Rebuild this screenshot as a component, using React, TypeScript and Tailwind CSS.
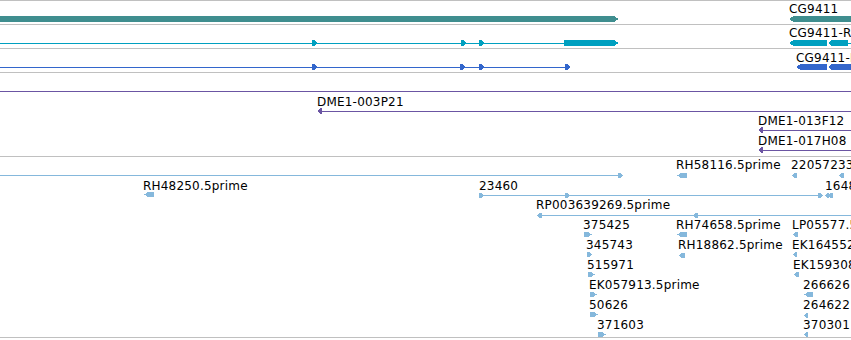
import React from 'react'

type Dir = 'r' | 'l' | 'n'

interface Shape {
  x: number
  y: number
  w: number
  h: number
  dir: Dir
  head?: number
  color: string
}

interface Line {
  x: number
  y: number
  w: number
  color: string
}

interface Text {
  x: number
  y: number
  text: string
}

interface Track {
  height: number
  lines: Line[]
  shapes: Shape[]
  labels: Text[]
}

const TEAL = '#3f8e8f'
const CYAN = '#00a0c0'
const BLUE = '#3366cc'
const PURPLE = '#6b55a3'
const EST = '#85b8dc'

function points(w: number, h: number, dir: Dir, head: number) {
  if (dir === 'r') return `0,0 ${w - head},0 ${w},${h / 2} ${w - head},${h} 0,${h}`
  if (dir === 'l') return `${head},0 ${w},0 ${w},${h} ${head},${h} 0,${h / 2}`
  return `0,0 ${w},0 ${w},${h} 0,${h}`
}

function Glyph({ s }: { s: Shape }) {
  return (
    <svg
      className="absolute"
      style={{ left: s.x, top: s.y }}
      width={s.w}
      height={s.h}
      viewBox={`0 0 ${s.w} ${s.h}`}
    >
      <polygon points={points(s.w, s.h, s.dir, s.head ?? 3)} fill={s.color} shapeRendering="crispEdges" />
    </svg>
  )
}

// small flag marker drawn on an intron line
const mark = (x: number, y: number, color: string, dir: Dir = 'r'): Shape => ({ x, y, w: 5, h: 6, dir, head: 3, color })
const est = (x: number, y: number, w: number, dir: Dir): Shape => ({ x, y, w, h: 5, dir, head: w > 6 ? 4 : 3, color: EST })

const tracks: Track[] = [
  {
    height: 23,
    lines: [],
    shapes: [
      { x: 0, y: 15, w: 619, h: 6, dir: 'r', head: 5, color: TEAL },
      { x: 789, y: 15, w: 70, h: 6, dir: 'l', head: 5, color: TEAL },
    ],
    labels: [{ x: 789, y: 1, text: 'CG9411' }],
  },
  {
    height: 23,
    lines: [
      { x: 0, y: 18, w: 564, color: CYAN },
      { x: 846, y: 18, w: 6, color: CYAN },
    ],
    shapes: [
      mark(312, 15, CYAN),
      mark(461, 15, CYAN),
      mark(479, 15, CYAN),
      { x: 564, y: 15, w: 55, h: 6, dir: 'r', head: 5, color: CYAN },
      { x: 789, y: 15, w: 38, h: 6, dir: 'l', head: 5, color: CYAN },
      { x: 828, y: 15, w: 20, h: 6, dir: 'l', head: 4, color: CYAN },
    ],
    labels: [{ x: 789, y: 1, text: 'CG9411-RA' }],
  },
  {
    height: 23,
    lines: [{ x: 0, y: 18, w: 566, color: BLUE }],
    shapes: [
      mark(312, 15, BLUE),
      mark(460, 15, BLUE),
      mark(479, 15, BLUE),
      mark(565, 15, BLUE),
      { x: 796, y: 15, w: 31, h: 6, dir: 'l', head: 5, color: BLUE },
      { x: 828, y: 15, w: 30, h: 6, dir: 'l', head: 4, color: BLUE },
    ],
    labels: [{ x: 796, y: 2, text: 'CG9411-RB' }],
  },
  {
    height: 83,
    lines: [
      { x: 0, y: 18, w: 851, color: PURPLE },
      { x: 318, y: 38, w: 533, color: PURPLE },
      { x: 759, y: 57, w: 92, color: PURPLE },
      { x: 759, y: 77, w: 92, color: PURPLE },
    ],
    shapes: [mark(317, 35, PURPLE, 'l'), mark(758, 54, PURPLE, 'l'), mark(758, 74, PURPLE, 'l')],
    labels: [
      { x: 317, y: 22, text: 'DME1-003P21' },
      { x: 758, y: 41, text: 'DME1-013F12' },
      { x: 758, y: 61, text: 'DME1-017H08' },
    ],
  },
  {
    height: 180,
    lines: [
      { x: 0, y: 18, w: 620, color: EST },
      { x: 480, y: 38, w: 342, color: EST },
      { x: 537, y: 58, w: 314, color: EST },
    ],
    shapes: [
      est(618, 16, 5, 'r'),
      est(677, 16, 10, 'l'),
      est(792, 16, 5, 'l'),
      est(839, 16, 5, 'l'),
      est(144, 35, 10, 'l'),
      est(479, 36, 5, 'r'),
      est(565, 36, 5, 'r'),
      est(818, 36, 5, 'r'),
      est(825, 36, 4, 'l'),
      est(828, 36, 5, 'l'),
      est(537, 56, 5, 'l'),
      est(693, 56, 5, 'l'),
      est(584, 75, 8, 'r'),
      est(587, 95, 5, 'r'),
      est(588, 115, 7, 'r'),
      est(590, 135, 7, 'r'),
      est(590, 155, 8, 'r'),
      est(598, 175, 8, 'r'),
      est(677, 75, 10, 'l'),
      est(679, 96, 6, 'l'),
      est(793, 75, 5, 'l'),
      est(793, 95, 4, 'l'),
      est(794, 115, 5, 'l'),
      est(804, 135, 9, 'l'),
      est(804, 156, 4, 'l'),
      est(804, 175, 4, 'l'),
    ],
    labels: [
      { x: 676, y: 1, text: 'RH58116.5prime' },
      { x: 791, y: 1, text: '22057233' },
      { x: 143, y: 22, text: 'RH48250.5prime' },
      { x: 479, y: 22, text: '23460' },
      { x: 825, y: 22, text: '164827' },
      { x: 536, y: 41, text: 'RP003639269.5prime' },
      { x: 583, y: 61, text: '375425' },
      { x: 586, y: 81, text: '345743' },
      { x: 587, y: 101, text: '515971' },
      { x: 589, y: 121, text: 'EK057913.5prime' },
      { x: 589, y: 141, text: '50626' },
      { x: 597, y: 161, text: '371603' },
      { x: 676, y: 61, text: 'RH74658.5prime' },
      { x: 678, y: 81, text: 'RH18862.5prime' },
      { x: 792, y: 61, text: 'LP05577.5prime' },
      { x: 792, y: 81, text: 'EK164552.5prime' },
      { x: 793, y: 101, text: 'EK159308.5prime' },
      { x: 803, y: 121, text: '266626' },
      { x: 803, y: 141, text: '264622' },
      { x: 803, y: 161, text: '370301' },
    ],
  },
]

function TrackRow({ track }: { track: Track }) {
  return (
    <div className="relative w-full" style={{ height: track.height }}>
      {track.lines.map((l, i) => (
        <div key={`l-${i}`} className="absolute h-px" style={{ left: l.x, top: l.y, width: l.w, background: l.color }} />
      ))}
      {track.shapes.map((s, i) => (
        <Glyph key={`s-${i}`} s={s} />
      ))}
      {track.labels.map((t, i) => (
        <div
          key={`t-${i}`}
          className="absolute whitespace-nowrap text-[12px] leading-[12px] tracking-[0.2px] text-black"
          style={{ left: t.x, top: t.y + 1 }}
        >
          {t.text}
        </div>
      ))}
    </div>
  )
}

export default function App() {
  return (
    <div className="w-[851px] h-[340px] overflow-hidden bg-white font-['DejaVu_Sans',sans-serif]">
      <div className="flex flex-col">
        {tracks.map((t, i) => (
          <React.Fragment key={i}>
            <div className="h-px w-full bg-[#c0c0c0]" />
            <TrackRow track={t} />
          </React.Fragment>
        ))}
        <div className="h-px w-full bg-[#c0c0c0]" />
      </div>
    </div>
  )
}
